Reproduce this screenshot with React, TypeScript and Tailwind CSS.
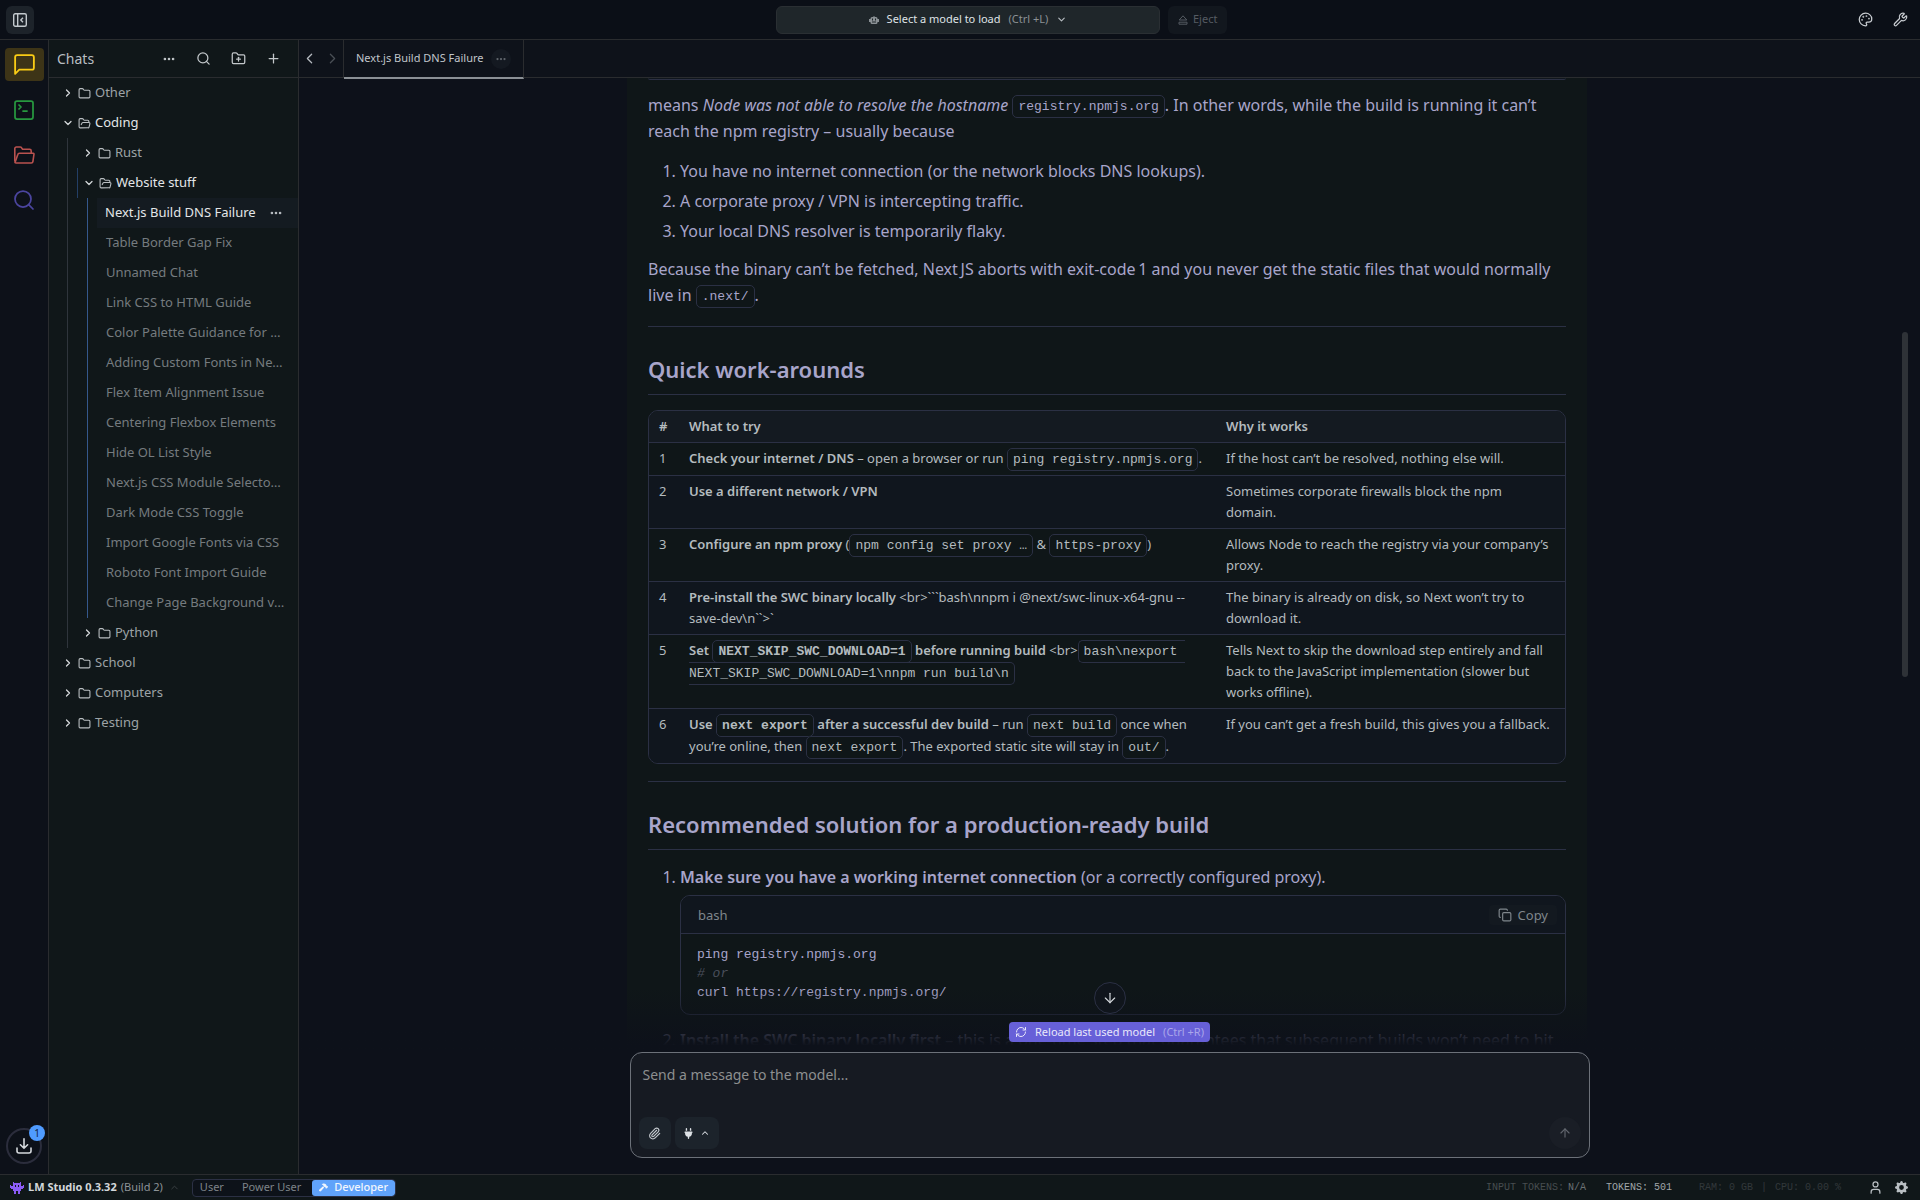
import React from 'react';
import {
  ArrowDown,
  ArrowUp,
  ChevronDown,
  ChevronLeft,
  ChevronRight,
  ChevronUp,
  Copy,
  Ellipsis,
  Folder,
  FolderOpen,
  FolderPlus,
  Palette,
  Paperclip,
  Plus,
  RefreshCw,
  Search,
  SquareTerminal,
  User,
  Wrench,
} from 'lucide-react';
import { FiMessageSquare } from 'react-icons/fi';
import { BsGearFill } from 'react-icons/bs';
import { FaHammer, FaPlug } from 'react-icons/fa6';

const chats = [
  'Table Border Gap Fix',
  'Unnamed Chat',
  'Link CSS to HTML Guide',
  'Color Palette Guidance for Websites',
  'Adding Custom Fonts in Next.js',
  'Flex Item Alignment Issue',
  'Centering Flexbox Elements',
  'Hide OL List Style',
  'Next.js CSS Module Selector Issue',
  'Dark Mode CSS Toggle',
  'Import Google Fonts via CSS',
  'Roboto Font Import Guide',
  'Change Page Background via CSS',
];

const Code = ({ children }: { children: React.ReactNode }) => (
  <code className="rounded-[5px] border border-[#2b3044] bg-[#0f1618] px-[5px] py-[3px] align-middle font-['Liberation_Mono',monospace] text-[13px] leading-[21px] whitespace-break-spaces">
    {children}
  </code>
);

const workarounds: { what: React.ReactNode; why: string }[] = [
  {
    what: (
      <>
        <b className="font-semibold">Check your internet / DNS</b> – open a browser or run <Code>ping registry.npmjs.org</Code>.
      </>
    ),
    why: 'If the host can’t be resolved, nothing else will.',
  },
  {
    what: <b className="font-semibold">Use a different network / VPN</b>,
    why: 'Sometimes corporate firewalls block the npm domain.',
  },
  {
    what: (
      <>
        <b className="font-semibold">Configure an npm proxy</b> (<Code>npm config set proxy …</Code> &amp; <Code>https-proxy</Code>)
      </>
    ),
    why: 'Allows Node to reach the registry via your company’s proxy.',
  },
  {
    what: (
      <>
        <b className="font-semibold">Pre‑install the SWC binary locally</b> {'<br>```bash\\nnpm i @next/swc-linux-x64-gnu --save-dev\\n``>`'}
      </>
    ),
    why: 'The binary is already on disk, so Next won’t try to download it.',
  },
  {
    what: (
      <>
        <b className="font-semibold">
          Set <Code>NEXT_SKIP_SWC_DOWNLOAD=1</Code> before running build
        </b>{' '}
        {'<br>'}
        <Code>{'bash\\nexport NEXT_SKIP_SWC_DOWNLOAD=1\\nnpm run build\\n'}</Code>
      </>
    ),
    why: 'Tells Next to skip the download step entirely and fall back to the JavaScript implementation (slower but works offline).',
  },
  {
    what: (
      <>
        <b className="font-semibold">
          Use <Code>next export</Code> after a successful dev build
        </b>{' '}
        – run <Code>next build</Code> once when you’re online, then <Code>next export</Code>. The exported static site will stay in{' '}
        <Code>out/</Code>.
      </>
    ),
    why: 'If you can’t get a fresh build, this gives you a fallback.',
  },
];

const TopBar = () => (
  <header className="flex h-10 shrink-0 items-center border-b border-[#2a2c2f] bg-[#0b0f17]">
    <div className="mr-6 flex-1">
      <button aria-label="Collapse sidebar" className="ml-[6px] flex h-7 w-7 items-center justify-center rounded-md bg-[#1d232a] text-[#c3c9ce]">
        <svg width="14" height="14" viewBox="0 0 14 14" fill="none" stroke="currentColor" strokeWidth="1.4">
          <rect x="0.7" y="0.7" width="12.6" height="12.6" rx="1.5" />
          <path d="M4.7 1v12M10 4.8 7.8 7 10 9.2" />
        </svg>
      </button>
    </div>
    <button className="flex h-7 w-96 items-center justify-center rounded-md border border-[#2a2f33] bg-[#1f262a] text-[11px] text-[#dfe3e6]">
      <svg width="10" height="8" viewBox="0 0 10 8" className="mr-2 text-[#8b9195]">
        <path
          fill="currentColor"
          fillRule="evenodd"
          d="M4.5 0h1v1H7a1.500 1.500 0 0 1 1.500 1.500V3H10v3H8.500v.5A1.500 1.500 0 0 1 7 8H3a1.500 1.500 0 0 1-1.500-1.500V6H0V3h1.500v-.5A1.500 1.500 0 0 1 3 1h1.500zM3 2.500v2h1v-2zM6 2.500v2h1v-2zM3 5.500v1h4v-1z"
        />
      </svg>
      <span>Select a model to load</span>
      <span className="ml-2 text-[#8b9195]">(Ctrl +L)</span>
      <ChevronDown size={11} strokeWidth={2.5} className="ml-2 text-[#b6bcc0]" />
    </button>
    <div className="ml-2 flex flex-1 items-center justify-between">
      <button disabled className="flex h-7 items-center gap-[5px] rounded-md bg-[#12171e] px-[10px] text-[11px] text-[#555b62]">
        <svg width="10" height="10" viewBox="0 0 10 10" fill="none" stroke="currentColor" strokeWidth="1">
          <path d="M5 .8 8.8 5H1.2zM1 7.2h8v2H1z" />
        </svg>
        Eject
      </button>
      <div className="flex items-center gap-5 pr-3 text-[#c9cdd2]">
        <button aria-label="Theme"><Palette size={15} /></button>
        <button aria-label="Tools"><Wrench size={15} /></button>
      </div>
    </div>
  </header>
);

const Rail = () => (
  <nav className="flex w-[49px] shrink-0 flex-col items-center border-r border-[#2a2c2f] bg-[#0d1119] pt-2 pb-[10px]">
    <div className="flex flex-1 flex-col gap-3">
      <button aria-label="Chats" className="flex h-[33px] w-[39px] items-center justify-center rounded bg-[#3d3417] text-[#facc15]">
        <FiMessageSquare size={25} strokeWidth={1.75} />
      </button>
      <button aria-label="Developer" className="flex h-[33px] w-[39px] items-center justify-center text-[#27983f]">
        <SquareTerminal size={24} strokeWidth={1.75} />
      </button>
      <button aria-label="My models" className="flex h-[33px] w-[39px] items-center justify-center text-[#b9524f]">
        <svg width="22" height="18" viewBox="0 0 22 18" fill="none" stroke="currentColor" strokeWidth="1.6" strokeLinejoin="round">
          <path d="M1.8 15.5V2.6c0-.9.7-1.6 1.6-1.6h3.8c.5 0 .9.2 1.2.6l1.2 1.7h7c.9 0 1.6.7 1.6 1.6v2.3" />
          <path d="M2.2 16 4.8 8.5c.2-.7.9-1.2 1.6-1.2h14c.4 0 .6.3.6.7l-1.1 7.7c-.1.8-.8 1.3-1.6 1.3H3c-.8 0-1.2-.5-1.2-1.2" />
        </svg>
      </button>
      <button aria-label="Discover" className="flex h-[33px] w-[39px] items-center justify-center text-[#4b459f]">
        <Search size={24} strokeWidth={1.75} />
      </button>
    </div>
    <button aria-label="Downloads" className="relative flex h-9 w-9 items-center justify-center rounded-full border-2 border-[#2b2d3c] text-[#d5d9dd]">
      <svg width="16" height="16" viewBox="0 0 16 16" fill="none" stroke="currentColor" strokeWidth="1.6" strokeLinecap="round" strokeLinejoin="round">
        <path d="M8 .8v9.4M4.4 6.8 8 10.3l3.6-3.5M1 10v3a2 2 0 0 0 2 2h10a2 2 0 0 0 2-2v-3" />
      </svg>
      <span className="absolute -top-[5px] -right-[5px] flex h-4 w-4 items-center justify-center rounded-full bg-[#4f9bff] text-[10px] text-[#10203a]">1</span>
    </button>
  </nav>
);

const FolderRow = ({ name, open }: { name: string; open?: boolean }) => (
  <button className={`flex h-[30px] w-full items-center text-[13px] ${open ? 'text-[#e3e6e8]' : 'text-[#9da3a6]'}`}>
    {open ? (
      <ChevronDown size={12} strokeWidth={2.5} className="mr-1 text-[#d5d9db]" />
    ) : (
      <ChevronRight size={12} strokeWidth={2.5} className="mr-1 text-[#d5d9db]" />
    )}
    {open ? (
      <FolderOpen size={13} className="mr-1 text-[#b9bec1]" />
    ) : (
      <Folder size={13} className="mr-1 text-[#b9bec1]" />
    )}
    {name}
  </button>
);

const Sidebar = () => (
  <aside className="flex w-[250px] shrink-0 flex-col border-r border-[#2a2c2f] bg-[#101719]">
    <div className="flex h-[38px] shrink-0 items-center border-b border-[#2a2c2f] pr-[17px] pl-2">
      <h1 className="flex-1 text-sm text-[#b9bec2]">Chats</h1>
      <div className="flex items-center gap-5 text-[#c3c8cb]">
        <button aria-label="More"><Ellipsis size={14} strokeWidth={2.5} /></button>
        <button aria-label="Search chats"><Search size={15} /></button>
        <button aria-label="New folder"><FolderPlus size={15} /></button>
        <button aria-label="New chat"><Plus size={15} /></button>
      </div>
    </div>
    <div className="pl-[13px]">
      <FolderRow name="Other" />
      <FolderRow name="Coding" open />
      <div className="ml-[5px] border-l border-[#2f353c]">
        <div className="pl-[14px]">
          <FolderRow name="Rust" />
        </div>
        <div className="ml-[9px] border-l border-[#233f66] pl-[5px]">
          <FolderRow name="Website stuff" open />
        </div>
        <div className="ml-[19px] border-l border-[#35588c] pl-[9px] text-[13px]">
          <div className="flex h-[30px] items-center bg-[#141b21] pr-[15px] pl-2">
            <a href="#" className="flex-1 whitespace-nowrap text-[#e3e6e8]">Next.js Build DNS Failure</a>
            <button aria-label="Chat options" className="text-[#b9bec2]"><Ellipsis size={14} strokeWidth={2.5} /></button>
          </div>
          {chats.map((chat) => (
            <a key={chat} href="#" className="block h-[30px] truncate pr-3 pl-[9px] leading-[29px] text-[#757b7f]">
              {chat}
            </a>
          ))}
        </div>
        <div className="pl-[14px]">
          <FolderRow name="Python" />
        </div>
      </div>
      <FolderRow name="School" />
      <FolderRow name="Computers" />
      <FolderRow name="Testing" />
    </div>
  </aside>
);

const Tabs = () => (
  <div className="flex h-[38px] shrink-0 border-b border-[#2a2c2f] bg-[#0e121a]">
    <div className="flex w-[45px] items-center justify-center gap-[6px] border-r border-[#2a2c2f]">
      <button aria-label="Back" className="text-[#b6bbc1]"><ChevronLeft size={17} strokeWidth={1.75} /></button>
      <button aria-label="Forward" className="text-[#4a4f56]"><ChevronRight size={17} strokeWidth={1.75} /></button>
    </div>
    <div className="relative z-10 -mb-[2px] flex items-center border-r border-b-2 border-[#2a2c2f] border-b-[#8b9095] px-3 text-[11px] text-[#c0c5ca]">
      <a href="#">Next.js Build DNS Failure</a>
      <button aria-label="Tab options" className="ml-2 flex h-5 w-5 items-center justify-center rounded-full bg-[#141921] text-[#63686f]">
        <Ellipsis size={12} strokeWidth={2.5} />
      </button>
    </div>
  </div>
);

const Message = () => (
  <article className="mx-auto max-w-[960px] bg-[#0f1618] px-[21px] text-base leading-[26px] text-[#a8a5ca]">
    <div className="h-[2px] rounded-b-lg border-b border-[#2b3044] bg-[#10161e]" />
    <p className="mt-3">
      means <em>Node was not able to resolve the hostname</em> <Code>registry.npmjs.org</Code>. In other words, while the build is
      running it can’t reach the npm registry – usually because
    </p>
    <ol className="mt-[14px] flex list-decimal flex-col gap-1 pl-8">
      <li>You have no internet connection (or the network blocks DNS lookups).</li>
      <li>A corporate proxy / VPN is intercepting traffic.</li>
      <li>Your local DNS resolver is temporarily flaky.</li>
    </ol>
    <p className="mt-3">
      Because the binary can’t be fetched, Next&#8239;JS aborts with exit‑code&#8239;1 and you never get the static files that would
      normally live in <Code>.next/</Code>.
    </p>
    <hr className="mt-[18px] border-[#2b3044]" />
    <h2 className="mt-[25px] border-b border-[#2b3044] pb-2 text-[22px] leading-[34px] font-semibold">Quick work‑arounds</h2>

    <div className="mt-[15px] overflow-hidden rounded-[10px] border border-[#2b3044] text-[13px] leading-[21px] text-[#b4bbbf]">
      <table className="w-full table-fixed border-collapse text-left">
        <colgroup>
          <col className="w-[30px]" />
          <col />
          <col className="w-[349px]" />
        </colgroup>
        <thead className="bg-[#141a21]">
          <tr>
            <th className="px-[10px] py-[5px] font-semibold">#</th>
            <th className="px-[10px] py-[5px] font-semibold">What to try</th>
            <th className="px-[10px] py-[5px] font-semibold">Why it works</th>
          </tr>
        </thead>
        <tbody>
          {workarounds.map((row, i) => (
            <tr key={row.why} className="border-t border-[#2b3044] align-top even:bg-[#10161e]">
              <td className="px-[10px] py-[5px]">{i + 1}</td>
              <td className="px-[10px] py-[5px]">{row.what}</td>
              <td className="py-[5px] pr-3 pl-[10px]">{row.why}</td>
            </tr>
          ))}
        </tbody>
      </table>
    </div>

    <hr className="mt-[17px] border-[#2b3044]" />
    <h2 className="mt-[25px] border-b border-[#2b3044] pb-2 text-[22px] leading-[34px] font-semibold">
      Recommended solution for a production‑ready build
    </h2>
    <ol className="mt-[14px] list-decimal pl-8">
      <li>
        <b className="font-semibold">Make sure you have a working internet connection</b> (or a correctly configured proxy).
        <div className="mt-[5px] overflow-hidden rounded-[10px] border border-[#2b3044]">
          <div className="flex h-[38px] items-center justify-between border-b border-[#2b3044] bg-[#10161e] pr-2 pl-[17px] text-[13px] text-[#7f868c]">
            <span>bash</span>
            <button className="flex h-5 items-center gap-[6px] rounded bg-[#131920] px-[9px]">
              <Copy size={14} />
              Copy
            </button>
          </div>
          <pre className="px-4 pt-[11px] pb-3 font-['Liberation_Mono',monospace] text-[13px] leading-[19px]">
            {'ping registry.npmjs.org\n'}
            <i className="text-[#4a4f5c]"># or</i>
            {'\ncurl https://registry.npmjs.org/'}
          </pre>
        </div>
      </li>
      <li className="mt-3">
        <b className="font-semibold">Install the SWC binary locally first</b> – this is a one‑time step that guarantees that subsequent
        builds won’t need to hit
      </li>
    </ol>
  </article>
);

const Composer = () => (
  <div className="relative mx-auto w-full max-w-[960px] pb-4">
    <div className="absolute inset-x-0 bottom-full z-10 flex flex-col items-center gap-2 pb-[10px]">
      <button aria-label="Scroll to bottom" className="flex h-8 w-8 items-center justify-center rounded-full border border-[#2b3044] bg-[#10151c] text-[#d5d9dd]">
        <ArrowDown size={16} strokeWidth={1.75} />
      </button>
      <button className="flex h-5 items-center rounded bg-[#6760d8] px-[6px] text-[11px] text-[#e9e8fb]">
        <RefreshCw size={12} className="mr-2" />
        Reload last used model
        <span className="ml-2 text-[#aaa6ea]">(Ctrl +R)</span>
      </button>
    </div>
    <form className="flex h-[106px] flex-col rounded-xl border border-[#6c7179] bg-[#161a22] px-2 pt-[11px] pb-2">
      <textarea
        aria-label="Message"
        placeholder="Send a message to the model..."
        className="w-full flex-1 resize-none bg-transparent px-1 text-sm leading-[22px] outline-none placeholder:text-[#8d8f90]"
      />
      <div className="flex items-center gap-1">
        <button type="button" aria-label="Attach file" className="flex h-8 w-8 items-center justify-center rounded-lg bg-[#1c232b] text-[#c6cbd0]">
          <Paperclip size={13} />
        </button>
        <button type="button" aria-label="Integrations" className="flex h-8 w-11 items-center justify-center gap-[6px] rounded-lg bg-[#1c232b] text-[#dde1e5]">
          <FaPlug size={11} />
          <ChevronUp size={10} strokeWidth={2.5} />
        </button>
        <button type="button" aria-label="Send" className="ml-auto flex h-8 w-8 items-center justify-center rounded-full bg-[#1a1e26] text-[#62666e]">
          <ArrowUp size={14} />
        </button>
      </div>
    </form>
  </div>
);

const StatusBar = () => (
  <footer className="flex h-[26px] shrink-0 items-center border-t border-[#2a2c2f] bg-[#101719] pr-3 pl-[10px] text-[11px]">
    <svg width="14" height="12" viewBox="0 0 14 12" fill="#8b5cf6" shapeRendering="crispEdges">
      <path
        fillRule="evenodd"
        d="M3 0h1v1h6V0h1v4h2V3h1v3h-1v1h-2v2h-1v3H8V9H6v3H4V9H3V7H1V6H0V3h1v1h2zM5 3v2h1V3zM8 3v2h1V3z"
      />
    </svg>
    <span className="ml-1 font-bold text-[#d3d7da]">LM Studio 0.3.32</span>
    <span className="ml-1 text-[#8d9397]">(Build 2)</span>
    <ChevronUp size={11} className="mr-3 ml-[6px] text-[#3c4246]" />
    <div className="flex h-[18px] items-center overflow-hidden rounded border border-[#2b3044] bg-[#0d1219] text-[#7d8388]">
      <button className="px-[7px]">User</button>
      <button className="px-[11px]">Power User</button>
      <button className="flex h-4 items-center gap-[6px] rounded-[3px] bg-[#60a3fa] px-[7px] font-medium text-[#f1f6fd]">
        <FaHammer size={9} />
        Developer
      </button>
    </div>
    <div className="ml-auto flex items-center font-['Liberation_Mono',monospace] text-[10px] text-[#32383b]">
      <span className="text-[#474d50]">INPUT TOKENS:</span>
      <span className="ml-1 text-[#6b7174]">N/A</span>
      <span className="ml-5 text-[#a0a6a9]">TOKENS: 501</span>
      <span className="ml-[27px]">RAM: 0 GB</span>
      <span className="mx-2">|</span>
      <span>CPU: 0.00 %</span>
    </div>
    <button aria-label="Account" className="ml-[27px] text-[#b9bfc3]"><User size={15} /></button>
    <button aria-label="Settings" className="ml-3 text-[#b9bfc3]"><BsGearFill size={13} /></button>
  </footer>
);

const App: React.FC = () => {
  return (
    <div className="flex h-screen flex-col overflow-hidden bg-[#0d111a] font-['Noto_Sans',sans-serif]">
      <TopBar />
      <div className="flex min-h-0 flex-1">
        <Rail />
        <Sidebar />
        <main className="flex min-w-0 flex-1 flex-col">
          <Tabs />
          <div className="relative min-h-0 flex-1 overflow-hidden pr-[5px]">
            <Message />
            <div className="absolute inset-x-0 bottom-0 h-16 bg-linear-to-b from-[#0d111a]/0 to-[#0d111a] to-90%" />
            <div className="absolute top-[254px] right-3 h-[345px] w-[6px] rounded-full bg-[#2e3237]" />
          </div>
          <Composer />
        </main>
      </div>
      <StatusBar />
    </div>
  );
};

export default App;
